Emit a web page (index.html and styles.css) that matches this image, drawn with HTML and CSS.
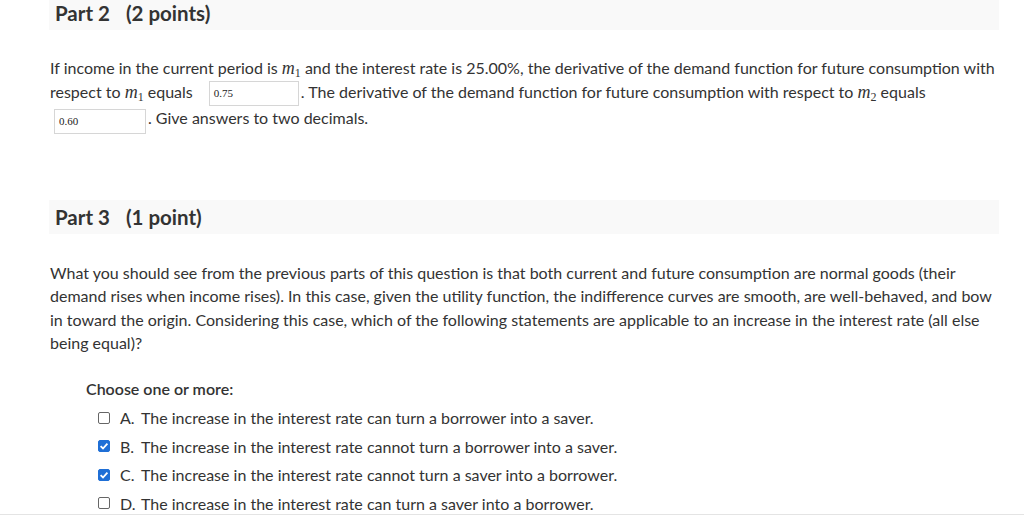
FILE: index.html
```html
<!DOCTYPE html>
<html>
<head>
<meta charset="utf-8">
<link rel="stylesheet" href="styles.css">
</head>
<body>
<div class="page">
  <div class="part-header first"><span class="pt">Part 2</span><span class="pts">(2 points)</span></div>
  <p class="q1">If income in the current period is <span class="math"><i>m</i><sub>1</sub></span> and the interest rate is 25.00%, the derivative of the demand function for future consumption with respect to <span class="math"><i>m</i><sub>1</sub></span> equals <span class="ans a1">0.75</span>. The derivative of the demand function for future consumption with respect to <span class="math"><i>m</i><sub>2</sub></span> equals <span class="ans a2">0.60</span>. Give answers to two decimals.</p>

  <div class="part-header second"><span class="pt">Part 3</span><span class="pts">(1 point)</span></div>
  <p class="q2">What you should see from the previous parts of this question is that both current and future consumption are normal goods (their demand rises when income rises). In this case, given the utility function, the indifference curves are smooth, are well-behaved, and bow in toward the origin. Considering this case, which of the following statements are applicable to an increase in the interest rate (all else being equal)?</p>

  <div class="choices">
    <div class="choose">Choose one or more:</div>
    <div class="opt"><span class="cb"></span><span class="lt">A.</span><span>The increase in the interest rate can turn a borrower into a saver.</span></div>
    <div class="opt"><span class="cb on"><svg viewBox="0 0 12 12" width="12" height="12"><path d="M2.6 6.2 L5 8.5 L9.4 3.6" fill="none" stroke="#fff" stroke-width="1.8"/></svg></span><span class="lt">B.</span><span>The increase in the interest rate cannot turn a borrower into a saver.</span></div>
    <div class="opt"><span class="cb on"><svg viewBox="0 0 12 12" width="12" height="12"><path d="M2.6 6.2 L5 8.5 L9.4 3.6" fill="none" stroke="#fff" stroke-width="1.8"/></svg></span><span class="lt">C.</span><span>The increase in the interest rate cannot turn a saver into a borrower.</span></div>
    <div class="opt"><span class="cb"></span><span class="lt">D.</span><span>The increase in the interest rate can turn a saver into a borrower.</span></div>
  </div>
</div>
<div class="bottom-line"></div>
</body>
</html>
```

FILE: styles.css
```css
html, body {
  margin: 0;
  padding: 0;
  background: #fff;
}
body {
  font-family: Lato, "Liberation Sans", sans-serif;
  font-size: 16px;
  color: #333;
  height: 516px;
  overflow: hidden;
  position: relative;
}
.page {
  margin-left: 49px;
  width: 950px;
}
.part-header {
  background: #f9f9f9;
  height: 34px;
  line-height: 34px;
  padding-left: 6px;
  font-weight: 700;
  font-size: 20.5px;
  color: #333;
}
.part-header.first {
  margin-top: -4px;
}
.part-header .pts {
  margin-left: 16px;
}
p {
  margin: 0;
  padding-left: 1px;
}
.q1 {
  margin-top: 26px;
  line-height: 24px;
}
.q2 {
  margin-top: 27px;
  line-height: 23.4px;
}
.part-header.second {
  margin-top: 66px;
}
.math {
  font-family: "Liberation Serif", "DejaVu Serif", serif;
  font-size: 18px;
  white-space: nowrap;
}
.math i {
  font-style: italic;
}
.math sub {
  font-size: 12px;
  vertical-align: -3px;
  line-height: 0;
}
.ans {
  display: inline-block;
  box-sizing: border-box;
  width: 90px;
  height: 25px;
  line-height: 23px;
  border: 1px solid #d6d6d6;
  background: #fff;
  font-family: "Liberation Serif", serif;
  font-size: 11px;
  color: #222;
  padding-left: 4px;
  margin-right: 2px;
  vertical-align: middle;
}
.a1 {
  margin-left: 12px;
  margin-top: -1px;
}
.a2 {
  width: 92px;
  margin-left: 4px;
  margin-top: 3px;
}
.choices {
  margin-top: 23px;
  padding-left: 37px;
}
.choose {
  font-weight: 600;
  line-height: 22px;
  color: #333;
}
.opt {
  display: flex;
  align-items: center;
  height: 28.5px;
  padding-left: 12px;
}
.choose + .opt {
  margin-top: 4px;
}
.cb {
  box-sizing: border-box;
  width: 12px;
  height: 12px;
  border: 1px solid #666;
  border-radius: 2px;
  background: #fff;
  display: inline-flex;
  margin-right: 10px;
}
.cb.on {
  background: #1f6fd6;
  border-color: #1f6fd6;
}
.cb svg {
  margin: -1px;
}
.lt {
  width: 21px;
}
.bottom-line {
  position: absolute;
  left: 0;
  right: 0;
  top: 514px;
  height: 1px;
  background: #e4e4e4;
}
```
